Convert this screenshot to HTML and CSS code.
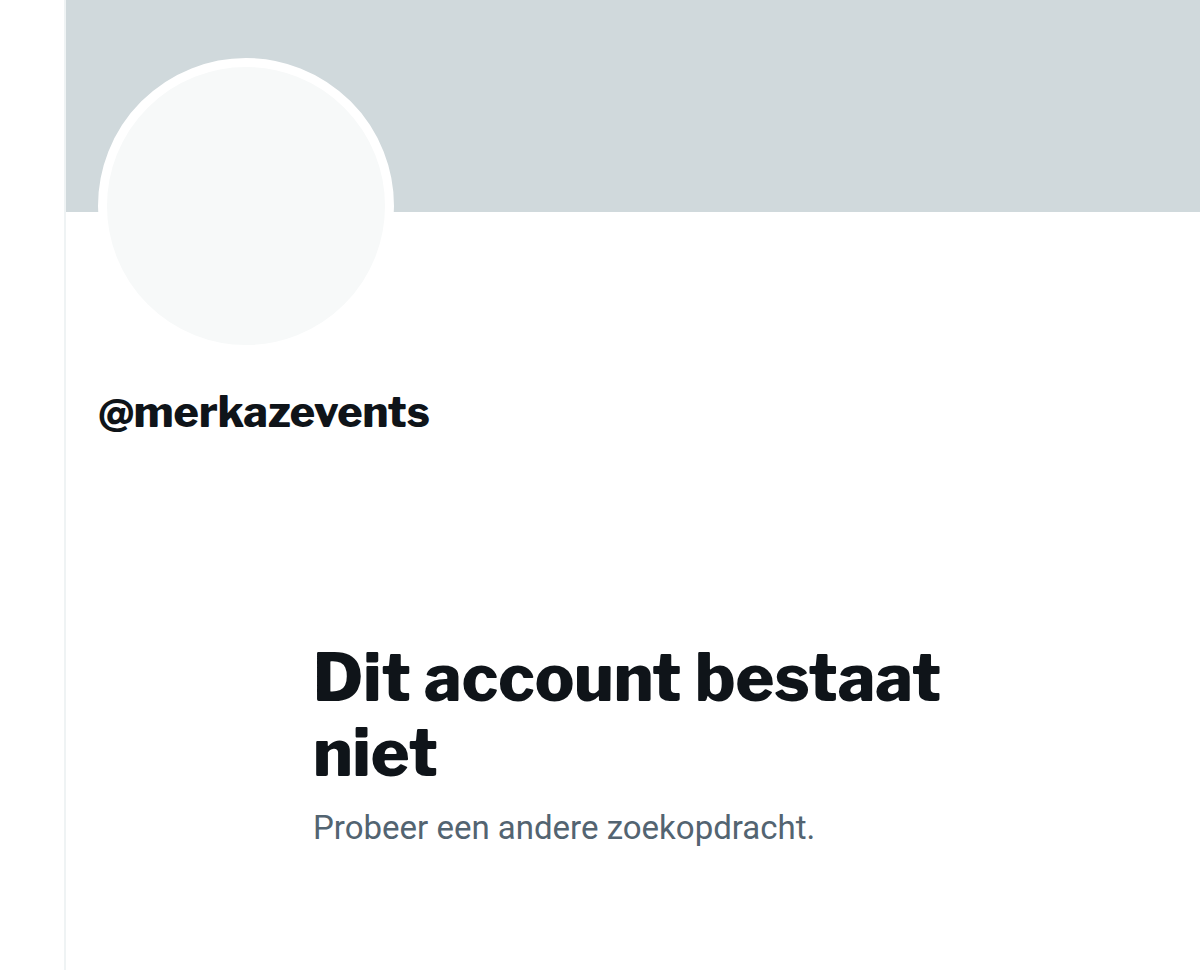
FILE: index.html
```html
<!DOCTYPE html>
<html lang="nl">
<head>
    <meta charset="UTF-8">
    <meta name="viewport" content="width=device-width, initial-scale=1.0">
    <title>@merkazevents</title>
    <link rel="stylesheet" href="styles.css">
</head>
<body>

<main class="profile">
    <div class="banner"></div>
    <header class="profile-header">
        <div class="avatar"></div>
        <h1 class="username">@merkazevents</h1>
    </header>
    <section class="empty-state">
        <h2 class="empty-title">Dit account bestaat niet</h2>
        <p class="empty-text">Probeer een andere zoekopdracht.</p>
    </section>
</main>

</body>
</html>
```

FILE: styles.css
```css
* {
    box-sizing: border-box;
}
body {
    margin: 0;
    background-color: #ffffff;
    color: #0f1419;
    font-family: Roboto, "Liberation Sans", sans-serif;
}
.profile {
    min-height: 100vh;
    margin-left: 64px;
    border-left: 2px solid #eff3f4;
}
.banner {
    height: 212px;
    background-color: #d0d9dc;
}
.profile-header {
    padding: 0 32px;
}
.avatar {
    width: 296px;
    height: 296px;
    margin-top: -154px;
    border: 9px solid #ffffff;
    border-radius: 50%;
    background-color: #f7f9f9;
}
.username,
.empty-title {
    font-family: "Libre Franklin", Roboto, "Liberation Sans", sans-serif;
    font-weight: 800;
}
.username {
    margin: 32px 0 0;
    font-size: 43px;
    line-height: 52px;
}
.empty-state {
    max-width: 640px;
    margin: 202px auto 0;
}
.empty-title {
    margin: 0;
    font-size: 66px;
    line-height: 75px;
}
.empty-text {
    margin: 16px 0 0;
    color: #536471;
    font-size: 33px;
    line-height: 44px;
}
```
